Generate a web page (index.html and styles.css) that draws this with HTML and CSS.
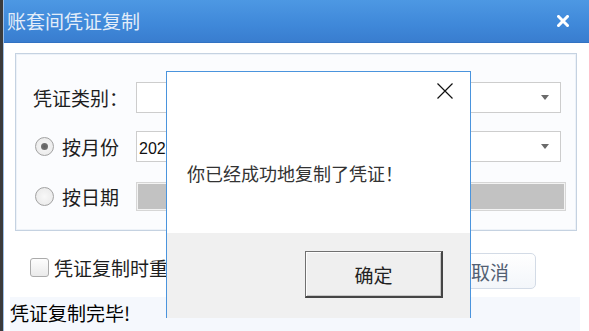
FILE: index.html
```html
<!DOCTYPE html>
<html lang="zh-CN">
<head>
<meta charset="utf-8">
<title>账套间凭证复制</title>
<link rel="stylesheet" href="styles.css">
</head>
<body>
<div class="window">
  <div class="titlebar">
    <span class="title">账套间凭证复制</span>
    <svg class="win-close" width="12" height="12" viewBox="0 0 12 12"><path d="M1.5 1.5 L10.5 10.5 M10.5 1.5 L1.5 10.5" stroke="#fff" stroke-width="3" stroke-linecap="square"/></svg>
  </div>
  <div class="content">
    <div class="group">
      <div class="row r1">
        <span class="label">凭证类别：</span>
        <div class="combo"><span class="val"></span><span class="arrow"></span></div>
      </div>
      <div class="row r2">
        <span class="radio checked"></span>
        <span class="rlabel">按月份</span>
        <div class="combo"><span class="val">2021年01月</span><span class="arrow"></span></div>
      </div>
      <div class="row r3">
        <span class="radio"></span>
        <span class="rlabel">按日期</span>
        <div class="datebox"></div>
      </div>
    </div>
    <div class="actions">
      <span class="checkbox"></span>
      <span class="clabel">凭证复制时重新编号</span>
      <button class="cancel">取消</button>
    </div>
    <div class="status">凭证复制完毕!</div>
  </div>
</div>

<div class="dialog">
  <div class="dlg-main">
    <div class="dlg-head">
      <svg width="16" height="16" viewBox="0 0 16 16"><path d="M0.5 0.5 L15.5 15.5 M15.5 0.5 L0.5 15.5" stroke="#111" stroke-width="1.2"/></svg>
    </div>
    <div class="msg">你已经成功地复制了凭证！</div>
  </div>
  <div class="dlg-foot">
    <button class="ok">确定</button>
  </div>
</div>
</body>
</html>
```
FILE: styles.css
```css
* { box-sizing: border-box; }
body {
  margin: 0;
  width: 589px;
  height: 331px;
  overflow: hidden;
  position: relative;
  background: #3b3b3b;
  font-family: "Noto Sans CJK SC", "Liberation Sans", sans-serif;
  font-size: 19px;
  color: #1e1e1e;
}
.window {
  margin-left: 3px;
  height: 331px;
  border-left: 1px solid #9dbfe6;
  background: #fff;
  display: flex;
  flex-direction: column;
}
.titlebar {
  height: 43px;
  flex: none;
  display: flex;
  align-items: center;
  justify-content: space-between;
  padding: 0 20px 0 3px;
  background: linear-gradient(#4d98e3, #3f88d9 60%, #397dcf);
  border-bottom: 1px solid #3272c2;
}
.title {
  font-size: 19px;
  line-height: 24px;
  color: #e3edf9;
}
.win-close { display: block; }
.content {
  flex: 1;
  display: flex;
  flex-direction: column;
}
.group {
  margin: 10px 0 0 11px;
  width: 562px;
  height: 178px;
  border: 1px solid #c5d2e1;
  box-shadow: inset 0 0 0 1px #edf2f8;
  background: #fbfcfe;
  padding: 28px 0 0 17px;
  display: flex;
  flex-direction: column;
}
.row {
  display: flex;
  align-items: center;
  flex: none;
}
.r1 { height: 31px; margin-bottom: 18px; }
.r2 { height: 31px; margin-bottom: 20px; }
.r3 { height: 29px; }
.label {
  width: 103px;
  line-height: 24px;
  color: #1e1e1e;
}
.radio {
  width: 19px;
  height: 19px;
  margin-left: 2px;
  border: 1px solid #a2a2a2;
  border-radius: 50%;
  background: radial-gradient(circle, #f8f8f8 0, #ececec 70%, #e0e0e0 100%);
  flex: none;
  display: flex;
  align-items: center;
  justify-content: center;
}
.radio.checked::after {
  content: "";
  width: 7px;
  height: 7px;
  border-radius: 50%;
  background: radial-gradient(circle, #5f5f5f 0, #7c7c7c 100%);
}
.rlabel {
  margin-left: 8px;
  width: 74px;
  line-height: 24px;
}
.combo {
  width: 425px;
  height: 31px;
  border: 1px solid #cdcdcd;
  background: #fff;
  display: flex;
  align-items: center;
  justify-content: space-between;
  padding: 0 11px 0 2px;
}
.val {
  font-family: "Liberation Sans", "Noto Sans CJK SC", sans-serif;
  font-size: 16px;
  color: #111;
  white-space: nowrap;
}
.arrow {
  width: 0;
  height: 0;
  border-left: 4.5px solid transparent;
  border-right: 4.5px solid transparent;
  border-top: 5px solid #6a6a6a;
}
.datebox {
  width: 430px;
  height: 29px;
  border: 1px solid #d6d6d6;
  box-shadow: inset 0 0 0 1px #f3f3f3;
  background: #c2c2c2;
}
.actions {
  height: 66px;
  flex: none;
  display: flex;
  align-items: flex-start;
}
.checkbox {
  margin: 27px 0 0 26px;
  width: 19px;
  height: 19px;
  border: 1px solid #ababab;
  border-radius: 3px;
  background: linear-gradient(#fdfdfd, #eaeaea);
  flex: none;
}
.clabel {
  margin: 25px 0 0 5px;
  line-height: 24px;
  white-space: nowrap;
}
.cancel {
  margin: 22px 53px 0 auto;
  width: 92px;
  height: 36px;
  border: 1px solid #d3dbe6;
  border-radius: 5px;
  background: linear-gradient(#ffffff, #f3f6fa);
  font-family: inherit;
  font-size: 19px;
  color: #526073;
  padding: 0;
}
.status {
  margin-left: 6px;
  width: 570px;
  height: 34px;
  background: #f5f8fd;
  line-height: 32px;
  padding-left: 0;
  color: #000;
}
.dialog {
  position: absolute;
  left: 166px;
  top: 71px;
  width: 305px;
  height: 247px;
  border: 1px solid #4a94dd;
  border-bottom: none;
  background: #fff;
  display: flex;
  flex-direction: column;
}
.dlg-main {
  height: 161px;
  flex: none;
}
.dlg-head {
  display: flex;
  justify-content: flex-end;
  padding: 11px 17px 0 0;
  height: 27px;
}
.dlg-head svg { display: block; }
.msg {
  margin-top: 62px;
  padding-left: 20px;
  font-size: 18px;
  line-height: 24px;
  color: #333;
}
.dlg-foot {
  flex: 1;
  background: #f0f0f0;
  padding: 18px 0 0 138px;
}
.ok {
  width: 138px;
  height: 47px;
  border-style: solid;
  border-width: 1px 2px 2px 1px;
  border-color: #707070 #454545 #454545 #707070;
  box-shadow: inset 1px 1px 0 #fdfdfd, inset -1px -1px 0 #c6c6c6;
  background: #efefef;
  font-family: inherit;
  font-size: 19px;
  color: #222;
  padding: 0;
}
```
